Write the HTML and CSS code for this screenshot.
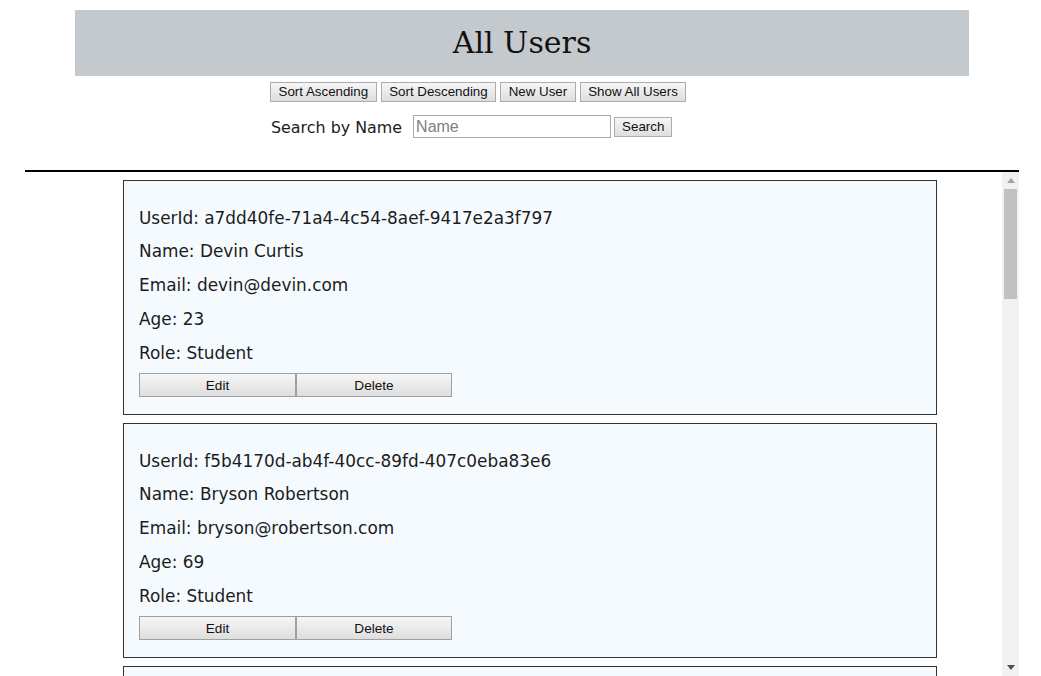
FILE: index.html
```html
<!DOCTYPE html>
<html>
<head>
<meta charset="utf-8">
<link rel="stylesheet" href="styles.css">
</head>
<body>
<header class="top">
  <h1 class="title">All Users</h1>
</header>
<div class="controls">
  <div class="btn-row">
    <button class="btn">Sort Ascending</button>
    <button class="btn">Sort Descending</button>
    <button class="btn">New User</button>
    <button class="btn">Show All Users</button>
  </div>
  <div class="search-row">
    <span class="search-label">Search by Name</span>
    <input class="search-input" type="text" placeholder="Name">
    <button class="btn">Search</button>
  </div>
</div>
<div class="rule"></div>
<div class="viewport">
  <div class="list">
    <div class="card">
      <p>UserId: a7dd40fe-71a4-4c54-8aef-9417e2a3f797</p>
      <p>Name: Devin Curtis</p>
      <p>Email: devin@devin.com</p>
      <p>Age: 23</p>
      <p>Role: Student</p>
      <div class="actions"><button class="act">Edit</button><button class="act">Delete</button></div>
    </div>
    <div class="card">
      <p>UserId: f5b4170d-ab4f-40cc-89fd-407c0eba83e6</p>
      <p>Name: Bryson Robertson</p>
      <p>Email: bryson@robertson.com</p>
      <p>Age: 69</p>
      <p>Role: Student</p>
      <div class="actions"><button class="act">Edit</button><button class="act">Delete</button></div>
    </div>
    <div class="card">
      <p>UserId: 3c9e21a7-5d02-4b8e-a1f3-6e2d90c4b715</p>
      <p>Name: Maya Hansen</p>
      <p>Email: maya@hansen.com</p>
      <p>Age: 31</p>
      <p>Role: Teacher</p>
      <div class="actions"><button class="act">Edit</button><button class="act">Delete</button></div>
    </div>
  </div>
  <div class="scrollbar">
    <div class="sb-btn">
      <svg width="8" height="5" viewBox="0 0 8 5"><polygon points="0,5 8,5 4,0" fill="#a3a3a3"/></svg>
    </div>
    <div class="sb-thumb"></div>
    <div class="sb-fill"></div>
    <div class="sb-btn">
      <svg width="8" height="5" viewBox="0 0 8 5"><polygon points="0,0 8,0 4,5" fill="#505050"/></svg>
    </div>
  </div>
</div>
</body>
</html>
```
FILE: styles.css
```css
html, body {
  margin: 0;
  padding: 0;
  height: 676px;
  overflow: hidden;
  background: #fff;
}
body {
  font-family: "DejaVu Sans", "Open Sans", sans-serif;
  color: #1c1c1c;
  padding-top: 10px;
  box-sizing: border-box;
}
.top {
  margin-left: 75px;
  width: 894px;
  height: 66px;
  background: #c4c9cd;
  display: flex;
  align-items: center;
  justify-content: center;
}
.title {
  margin: 0;
  font-family: "DejaVu Serif", "Liberation Serif", serif;
  font-weight: normal;
  font-size: 30px;
  color: #111;
  line-height: 1;
  padding-bottom: 1px;
}
.controls {
  margin-left: 270px;
  padding-top: 6px;
}
.btn-row {
  display: flex;
  gap: 4px;
}
.btn {
  font-family: "Liberation Sans", Arial, sans-serif;
  font-size: 13.33px;
  color: #111;
  height: 20px;
  padding: 0 7px;
  background: linear-gradient(#f6f6f6, #dedede);
  border: 1px solid #acacac;
  border-radius: 0;
  line-height: 18px;
}
.btn-row .btn {
  padding: 0 7.5px;
}
.search-row {
  display: flex;
  align-items: center;
  margin-top: 13px;
}
.search-label {
  font-size: 15.9px;
  margin-left: 1px;
  margin-right: 11px;
  padding-top: 2px;
}
.search-input {
  width: 198px;
  height: 23px;
  box-sizing: border-box;
  border: 1px solid #a9a9a9;
  padding: 0 2px;
  font-family: "Liberation Sans", Arial, sans-serif;
  font-size: 16px;
  margin: 0 3px 0 0;
}
.search-input::placeholder {
  color: #808080;
}
.rule {
  margin: 32px 0 0 25px;
  width: 994px;
  height: 2px;
  background: #000;
}
.viewport {
  margin-left: 25px;
  width: 994px;
  height: 504px;
  display: flex;
}
.list {
  flex: 1;
  overflow: hidden;
  padding-top: 8px;
}
.scrollbar {
  width: 17px;
  background: #f1f1f1;
  display: flex;
  flex-direction: column;
}
.sb-btn {
  height: 17px;
  display: flex;
  align-items: center;
  justify-content: center;
}
.sb-thumb {
  height: 110px;
  margin: 0 2px;
  background: #c1c1c1;
}
.sb-fill {
  flex: 1;
}
.card {
  box-sizing: border-box;
  width: 814px;
  height: 235px;
  margin: 0 0 8px 98px;
  border: 1px solid #333;
  background: #f5faff;
  padding: 15.75px 15px 16px;
}
.card p {
  margin: 8.75px 0;
  font-size: 16.9px;
  line-height: 25px;
}
.card p:last-of-type {
  margin-bottom: 7.75px;
}
.actions {
  display: flex;
}
.act {
  width: 157px;
  height: 24px;
  font-family: "Liberation Sans", Arial, sans-serif;
  font-size: 13.6px;
  color: #111;
  background: linear-gradient(#f6f6f6, #dedede);
  border: 1px solid #a0a0a0;
  border-radius: 0;
  padding: 0;
}
.act + .act {
  width: 156px;
}
```
